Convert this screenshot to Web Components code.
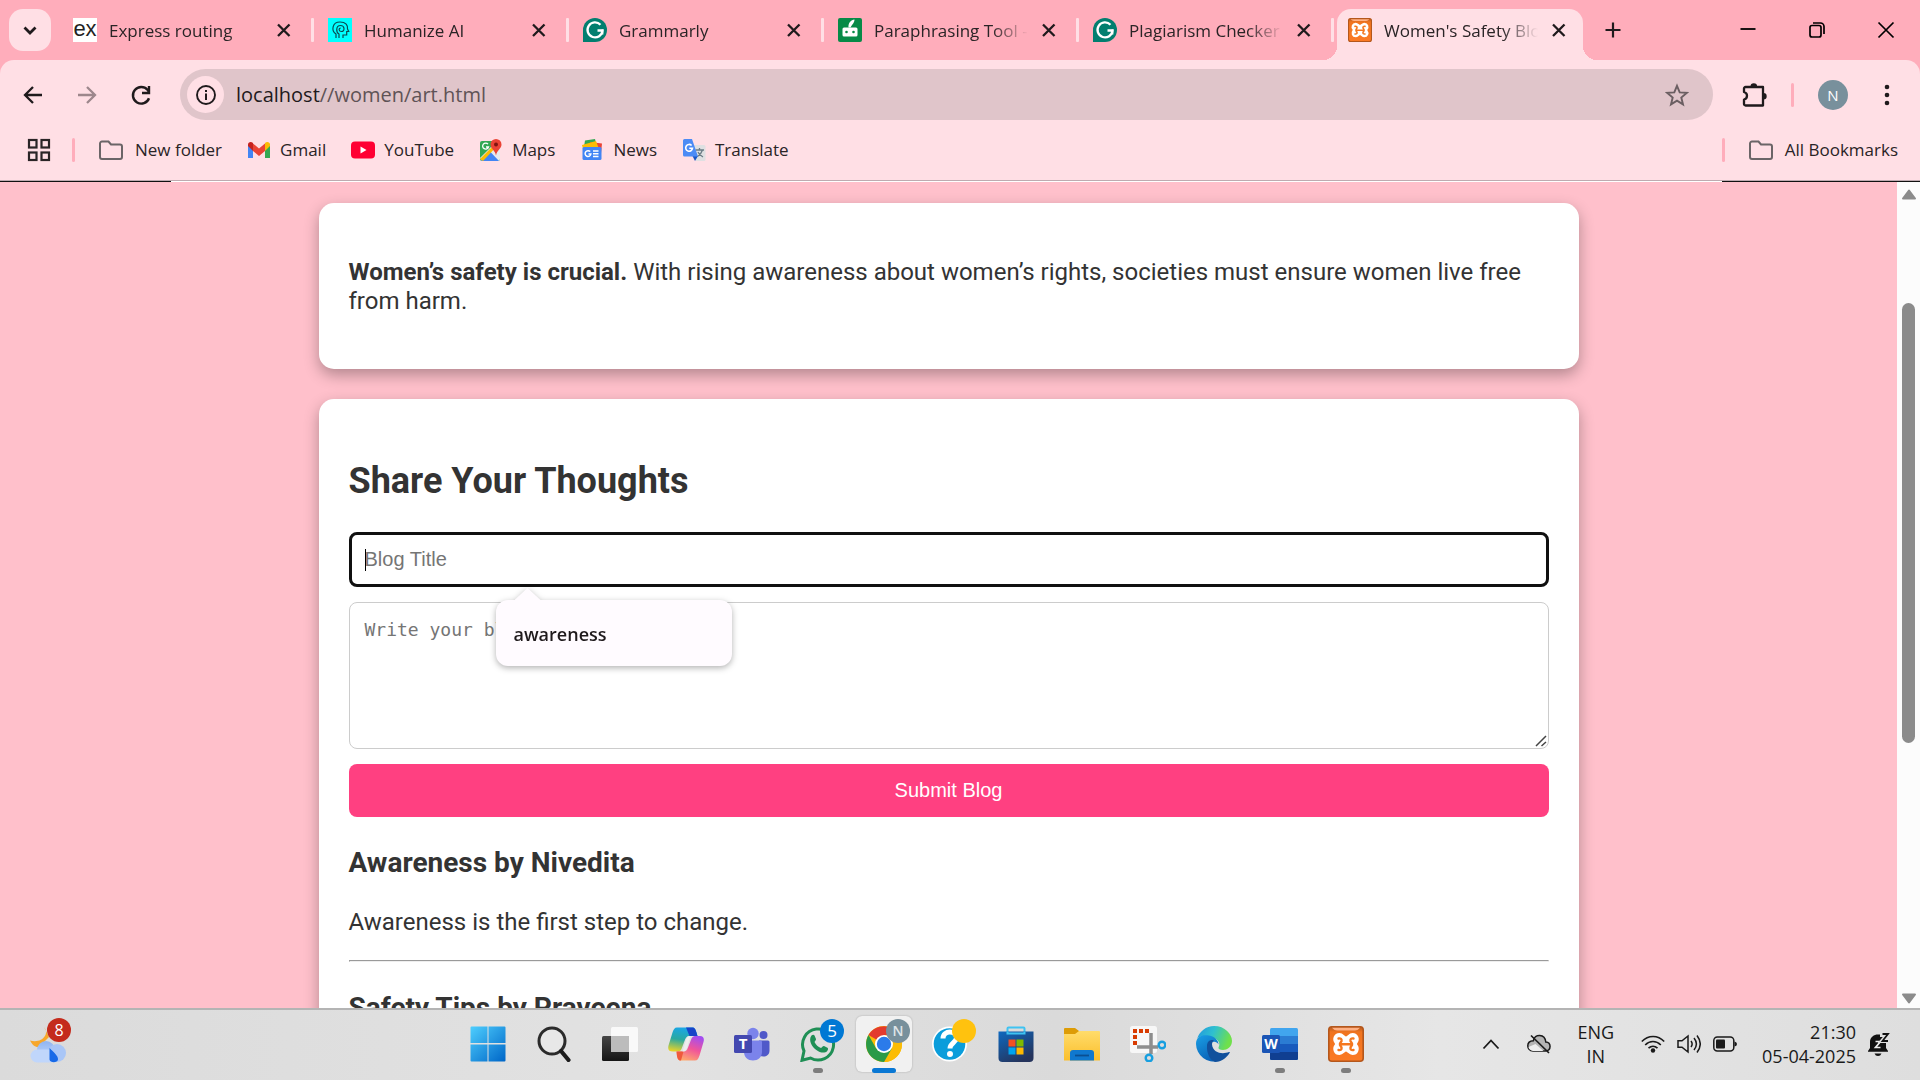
<!DOCTYPE html>
<html lang="en">
<head>
<meta charset="utf-8">
<title>Women's Safety Blog</title>
<style>
  html, body { margin: 0; height: 100%; }
  body { overflow: hidden; font-family: "Open Sans", "Noto Sans", sans-serif; color: #2a2426; }
  desktop-shell { height: 100vh; }
</style>
</head>
<body>
<desktop-shell>
  <tab-strip slot="tabs">
    <browser-tab icon="express" label="Express routing"></browser-tab>
    <browser-tab icon="humanize" label="Humanize AI"></browser-tab>
    <browser-tab icon="grammarly" label="Grammarly"></browser-tab>
    <browser-tab icon="quill" label="Paraphrasing Tool -"></browser-tab>
    <browser-tab icon="grammarly" label="Plagiarism Checker"></browser-tab>
    <browser-tab icon="xampp" label="Women's Safety Blog" active></browser-tab>
  </tab-strip>
  <address-bar slot="address"></address-bar>
  <bookmarks-bar slot="bookmarks">
    <bookmark-link icon="folder">New folder</bookmark-link>
    <bookmark-link icon="gmail">Gmail</bookmark-link>
    <bookmark-link icon="youtube">YouTube</bookmark-link>
    <bookmark-link icon="maps">Maps</bookmark-link>
    <bookmark-link icon="news">News</bookmark-link>
    <bookmark-link icon="translate">Translate</bookmark-link>
    <bookmark-link slot="end" icon="folder">All Bookmarks</bookmark-link>
  </bookmarks-bar>
  <page-view slot="page">
    <blog-card>
      <blog-text><b>Women’s safety is crucial.</b> With rising awareness about women’s rights, societies must ensure women live free from harm.</blog-text>
    </blog-card>
    <blog-card>
      <blog-form></blog-form>
      <blog-post heading="Awareness by Nivedita">Awareness is the first step to change.</blog-post>
      <blog-post heading="Safety Tips by Praveena"></blog-post>
    </blog-card>
  </page-view>
  <task-bar slot="taskbar">
    <task-item icon="start" label="Start"></task-item>
    <task-item icon="search" label="Search"></task-item>
    <task-item icon="taskview" label="Task view"></task-item>
    <task-item icon="copilot" label="Copilot"></task-item>
    <task-item icon="teams" label="Teams"></task-item>
    <task-item icon="whatsapp" label="WhatsApp" badge="5" tone="blue" state="running"></task-item>
    <task-item icon="chrome" label="Chrome" badge="N" tone="slate" state="current"></task-item>
    <task-item icon="help" label="Help" badge="" tone="amber"></task-item>
    <task-item icon="store" label="Store"></task-item>
    <task-item icon="explorer" label="File Explorer"></task-item>
    <task-item icon="snip" label="Snipping Tool"></task-item>
    <task-item icon="edge" label="Edge"></task-item>
    <task-item icon="word" label="Word" state="running"></task-item>
    <task-item icon="xampp" label="XAMPP" state="running"></task-item>
  </task-bar>
</desktop-shell>

<script>
/* Icon set: name -> [viewBox, markup] */
const ICONS = {
  chevron: ['0 0 24 24', '<path d="M6.500 9.500l5.500 5.500 5.500-5.500" fill="none" stroke="#1f1a1c" stroke-width="2.800"/>'],
  close: ['0 0 18 18', '<path d="M3 3.500l11.500 11.500M14.500 3.500L3 15" fill="none" stroke="#1f1a1c" stroke-width="2.300"/>'],
  plus: ['0 0 18 18', '<path d="M9 1.500v15M1.500 9h15" stroke="#1f1a1c" stroke-width="2.200"/>'],
  minimize: ['0 0 18 18', '<path d="M1.500 8h15" stroke="#000" stroke-width="1.800"/>'],
  restore: ['0 0 18 18', '<g fill="none" stroke="#000" stroke-width="1.700"><rect x="2" y="4.500" width="11" height="11.500" rx="2"/><path d="M5 2h7.500a3.500 3.500 0 013.500 3.500V13"/></g>'],
  winclose: ['0 0 18 18', '<path d="M1.500 1.500l15 15M16.500 1.500l-15 15" stroke="#000" stroke-width="1.700"/>'],
  back: ['0 0 24 24', '<path d="M21 12H4M12 4l-8 8 8 8" fill="none" stroke="#1f1a1c" stroke-width="2.300"/>'],
  forward: ['0 0 24 24', '<path d="M3 12h17M12 4l8 8-8 8" fill="none" stroke="#9d878c" stroke-width="2.300"/>'],
  reload: ['0 0 24 24', '<path d="M20 15.200A8.300 8.300 0 1118.500 6.800l1.300 1.800" fill="none" stroke="#1f1a1c" stroke-width="2.400"/><path d="M20 3v7h-7" fill="none" stroke="#1f1a1c" stroke-width="2.400"/>'],
  info: ['0 0 24 24', '<circle cx="12" cy="12" r="9" fill="none" stroke="#1f1a1c" stroke-width="1.900"/><path d="M12 10.500v6.500M12 7v2" stroke="#1f1a1c" stroke-width="2"/>'],
  star: ['0 0 24 24', '<path d="M12 2.800l2.700 6.600 7 .5-5.400 4.600 1.700 6.900-6-3.800-6 3.800 1.700-6.900-5.400-4.600 7-.5z" fill="none" stroke="#6b5f62" stroke-width="1.900"/>'],
  puzzle: ['0 0 26 26', '<path d="M4.500 5h17.500v18.500h-17.500a1.500 1.500 0 01-1.500-1.500v-4.500c4-1 4-6.500 0-7.500V6.500a1.500 1.500 0 011.500-1.500z" fill="none" stroke="#1f1a1c" stroke-width="2.300" stroke-linejoin="round"/><path d="M9.500 4.500a3.300 3.300 0 016.600 0zM22.500 11a3.200 3.200 0 010 6.400z" fill="#1f1a1c"/>'],
  dots: ['0 0 24 24', '<g fill="#1f1a1c"><circle cx="12" cy="4" r="2.300"/><circle cx="12" cy="12" r="2.300"/><circle cx="12" cy="20" r="2.300"/></g>'],
  apps: ['0 0 24 24', '<g fill="none" stroke="#2a2426" stroke-width="2.200"><rect x="2" y="2" width="7.500" height="7.500"/><rect x="14.500" y="2" width="7.500" height="7.500"/><rect x="2" y="14.500" width="7.500" height="7.500"/><rect x="14.500" y="14.500" width="7.500" height="7.500"/></g>'],
  folder: ['0 0 24 24', '<path d="M1 5.500a2 2 0 012-2h6.500l2.500 3h9a2 2 0 012 2v10.500a2 2 0 01-2 2H3a2 2 0 01-2-2z" fill="none" stroke="#6b6567" stroke-width="2"/>'],
  gmail: ['0 0 24 24', '<path d="M1 6v14h5V9.500z" fill="#4285f4"/><path d="M23 6v14h-5V9.500z" fill="#34a853"/><path d="M6 5.500v7.500l6 5 6-5V5.500l-6 5z" fill="#ea4335"/><path d="M1 8V6.500C1 4 4 3 6 5v8z" fill="#c5221f"/><path d="M23 8V6.500C23 4 20 3 18 5v8z" fill="#fbbc04"/>'],
  youtube: ['0 0 24 24', '<rect y="3.500" width="24" height="17" rx="4" fill="#ff0033"/><path d="M9.500 8.500v7l6-3.500z" fill="#fff"/>'],
  maps: ['0 0 24 24', '<rect x="1" y="3" width="20" height="20" rx="2" fill="#34a853"/><path d="M1 20L18 3h1l2 2v16a2 2 0 01-2 2H3z" fill="#e8eaed"/><path d="M2 22l9-8.500 9 9.500H3z" fill="#4285f4"/><path d="M1 21L19 3v4L4 23z" fill="#fbbc04"/><path d="M9 6.200a3 3 0 10.500 2.800H7" fill="none" stroke="#fff" stroke-width="1.300"/><path d="M17 1a5.500 5.500 0 015.500 5.500c0 4-4.500 5.500-5.500 11-1-5.500-5.500-7-5.500-11A5.500 5.500 0 0117 1z" fill="#ea4335"/><circle cx="17" cy="6.500" r="2" fill="#811411"/>'],
  news: ['0 0 24 24', '<path d="M5 2.500l10-1.500 2 8H4z" fill="#34a853"/><path d="M10 4l12 1.500-1 10H9z" fill="#ea4335"/><path d="M2 7l14-4 3 8H3z" fill="#fbbc04"/><rect x="2.500" y="9" width="19" height="13" rx="1.500" fill="#4285f4"/><path d="M10.200 13.600a2.900 2.900 0 10.700 2.400H8.500M13 13h5.500M13 15.700h5.500M13 18.400h5.500" fill="none" stroke="#fff" stroke-width="1.500"/>'],
  translate: ['0 0 24 24', '<path d="M10 7h12a1.500 1.500 0 011.500 1.500v13A1.500 1.500 0 0122 23h-8z" fill="#dfe0e2"/><path d="M13.500 12h8.500M17.500 10v2M20.500 12c-1 3.500-3 5-5 6.500M16 14c1 2.500 3 4 5 5" fill="none" stroke="#6b7c85" stroke-width="1.300"/><path d="M10.500 18H16l-3 5z" fill="#1a56c4"/><path d="M2.500 1H10l6 17.500H2.500A1.500 1.500 0 011 17V2.500A1.500 1.500 0 012.500 1z" fill="#4c8bf5"/><path d="M9.600 7.500a3.400 3.400 0 10.900 2.700H7.300" fill="none" stroke="#fff" stroke-width="1.600"/>'],
  express: ['0 0 24 24', '<rect width="24" height="24" fill="#fff"/><text x="12" y="17.500" font-family="Liberation Sans" font-size="22" text-anchor="middle" fill="#222">ex</text>'],
  humanize: ['0 0 24 24', '<rect width="24" height="24" fill="#0ff"/><path d="M8 20v-4C3 13 4 4 12 4c6 0 8 3.500 7.500 7l1.200 2.500h-2V17H15v3M11 20v-4c-3-1.500-3.500-8.500 1.500-8.500 4.500 0 4.500 6 1 6-3 0-3-3.500-.8-3.500" fill="none" stroke="#0a4a50" stroke-width="1.200"/>'],
  grammarly: ['0 0 24 24', '<path d="M0 24V12A12 12 0 1112 24z" fill="#027e6f"/><path d="M17.500 6.800A7.500 7.500 0 1019.500 12.500h-5" fill="none" stroke="#fff" stroke-width="2.300"/><path d="M19.500 11.500v5" stroke="#fff" stroke-width="1.800"/>'],
  quill: ['0 0 24 24', '<rect width="24" height="24" rx="2" fill="#078a47"/><rect x="4.500" y="9.500" width="15" height="9" rx="1.500" fill="#fff"/><circle cx="8.500" cy="14" r="1.300" fill="#078a47"/><circle cx="15.500" cy="14" r="1.300" fill="#078a47"/><path d="M10.500 9.500C10 5 13 2 16.500 1.500 16.500 5 14 6.500 12.500 9.500z" fill="#fff"/>'],
  xampp: ['0 0 36 36', '<defs><linearGradient id="a" x2="0" y2="1"><stop offset="0" stop-color="#b25a22"/><stop offset=".15" stop-color="#f0741f"/><stop offset="1" stop-color="#fb7a24"/></linearGradient></defs><rect x=".8" y=".8" width="34.400" height="34.400" rx="3" fill="url(#a)" stroke="#b4571c" stroke-width="1.600"/><path d="M4 1.800h28q-2 2.700-5 2.700H9q-3 0-5-2.700z" fill="#ffb184"/><path d="M11.500 8.500c3 0 4.500 3.500 6.500 3.500s3.500-3.500 6.500-3.500c4.500 0 6 5 3.500 8-.8 1-.8 2 0 3 2.500 3 1 8-3.500 8-3 0-4.500-3.500-6.500-3.500s-3.500 3.500-6.500 3.500c-4.500 0-6-5-3.500-8 .8-1 .8-2 0-3-2.500-3-1-8 3.500-8z" fill="#fff" stroke="#fff" stroke-width="3" stroke-linejoin="round"/><path d="M10.500 12.500q3.500-.5 3 2.500l-1.500 2.500v1.500l1.500 2.500q.5 3-3 2.500M25.500 12.500q-3.500-.5-3 2.500l1.500 2.500v1.500l-1.500 2.500q-.5 3 3 2.500M12.500 18.300h11" fill="none" stroke="#f5781f" stroke-width="2.400" stroke-linecap="round"/>'],
  weather: ['0 0 36 36', '<defs><linearGradient id="a" x2="0" y2="1"><stop offset="0" stop-color="#8fb4f2"/><stop offset="1" stop-color="#c4d9fb"/></linearGradient></defs><path d="M14 0C20 7 12 17 0 13.500c2 4 5 7 9 6.500L19 10z" fill="#f7a72a"/><circle cx="16" cy="23" r="9" fill="url(#a)"/><circle cx="27" cy="26" r="9" fill="#a9c6f7"/><path d="M7 22.500h15V35.500H7A6.500 6.500 0 017 22.500z" fill="#c0d6fb"/><path d="M19.500 21c4 4 9 8 8.500 11.500-.5 3.500-8 3.500-8.500 0z" fill="#1769e8"/>'],
  start: ['0 0 36 36', '<defs><linearGradient id="a" gradientUnits="userSpaceOnUse" x1="0" y1="0" x2="34" y2="36"><stop offset="0" stop-color="#4fd0ff"/><stop offset="1" stop-color="#0067c8"/></linearGradient></defs><path d="M1.500 .5h16v16.500H.5V1.500a1 1 0 011-1zM18.500 .5h16a1 1 0 011 1V17h-17zM.5 18.500h17V35.500h-16a1 1 0 01-1-1zM18.500 18.500h17v16a1 1 0 01-1 1h-16z" fill="url(#a)"/>'],
  search: ['0 0 36 36', '<circle cx="16" cy="15" r="13" fill="#efefef" fill-opacity=".5" stroke="#2b2b2b" stroke-width="3"/><path d="M25 25l7.500 9" stroke="#1c1c1c" stroke-width="4.200" stroke-linecap="round"/>'],
  taskview: ['0 0 36 36', '<defs><linearGradient id="a" x2="0" y2="1"><stop offset="0" stop-color="#454545"/><stop offset="1" stop-color="#151515"/></linearGradient></defs><rect x="0" y="10" width="27" height="25" rx="1.500" fill="url(#a)"/><rect x="9" y="1" width="27" height="25" rx="1.500" fill="#fff" fill-opacity=".8"/><rect x="9" y="10" width="18" height="16" fill="#bcbcbc"/>'],
  copilot: ['0 0 36 36', '<defs><linearGradient id="a" x1=".5" x2=".3" y2="1"><stop offset="0" stop-color="#1aa6e8"/><stop offset=".5" stop-color="#2aa9a0"/><stop offset="1" stop-color="#e8d32a"/></linearGradient><linearGradient id="b" x1=".7" x2=".3" y2="1"><stop offset="0" stop-color="#a34df0"/><stop offset=".5" stop-color="#f0559a"/><stop offset="1" stop-color="#ffa96b"/></linearGradient></defs><path d="M9 1.500h15c3 0 3.500 2 4.500 5l1 3.500h-8c-3 0-4 2-5 5l-3 8c-1 2-2 2.500-4 2.500H5c-4 0-5.500-2-4.500-6l4-13c1-3 2-5 4.500-5z" fill="url(#a)"/><path d="M27 34.500H13c-3 0-3.500-2-4-4.500l-.5-4.500h7c2.500 0 3.500-1.500 4.500-4l3.500-9C24.500 10.500 26 10 28 10h4c3.500 0 4.500 2.500 3.500 6l-4 13.500c-1 3-2 5-4.500 5z" fill="url(#b)"/><path d="M18 1.500h6c3 0 3.500 2 4.500 5l1 3.500h-8z" fill="#1744c8"/><path d="M8.500 25.500h7L13 34.500c-3 0-3.500-2-4-4.500z" fill="#ef5a3c"/><path d="M18.500 12.500c1-2 2-2.500 4-2.500l-3.500 12c-1 2.500-2 3.500-4.500 3.500z" fill="#eee"/>'],
  teams: ['0 0 36 36', '<circle cx="19" cy="7.500" r="5.700" fill="#7b83eb"/><circle cx="29.500" cy="9" r="4" fill="#5059c9"/><path d="M25 14.500h9a1.500 1.500 0 011.500 1.500v8.500c0 4-3 6-6 6s-5-1-6-3z" fill="#5059c9"/><path d="M10 14.500h16.500a1.500 1.500 0 011.500 1.500v10c0 5-4 8.500-9 8.500s-9-3.500-9-8.500z" fill="#7b83eb"/><rect x="0" y="9" width="18" height="18" rx="1.500" fill="#4348b0"/><text x="9" y="23" font-family="Open Sans" font-size="15" font-weight="700" fill="#fff" text-anchor="middle">T</text>'],
  whatsapp: ['0 0 36 36', '<path d="M2 34.300l2-9.300A15.500 15.500 0 1110.500 32z" fill="none" stroke="#1f8f55" stroke-width="3"/><path d="M11.500 9.500c1-1 2.500-1 3 0l1.500 3.500c.3 1-1 2-1.500 3 1.500 3 3.500 5 6.500 6 1-.7 2-2.300 3-2l3.500 1.700c1 .6.600 2.300-.5 3.500-2.500 2.500-7 1.500-11-1.500s-8-9.500-4.500-14.200z" fill="#1f8f55"/>'],
  chrome: ['0 0 36 36', '<circle cx="18" cy="18" r="18" fill="#fbbc05"/><path d="M18 18L2.500 9A18 18 0 0133.500 9H18z" fill="#e33b2e"/><path d="M18 9h15.600a18 18 0 012.400 9A18 18 0 0118 36l8-14z" fill="#fbbc05"/><path d="M2.500 9A18 18 0 0018 36l7.800-13.500H10.200z" fill="#2a9a48"/><circle cx="18" cy="18" r="9" fill="#fff"/><circle cx="18" cy="18" r="7.200" fill="#2b7bea"/>'],
  help: ['0 0 36 36', '<circle cx="17.500" cy="18" r="17.500" fill="#fff"/><circle cx="17.500" cy="18" r="15.800" fill="#0a9ddb"/><path d="M11 12.500c0-9 14-8 13.500-.5-.3 4.500-6.500 5-6.500 10.500" fill="none" stroke="#fff" stroke-width="5"/><circle cx="18" cy="28" r="3" fill="#fff"/>'],
  store: ['0 0 36 36', '<defs><linearGradient id="a" x2=".6" y2="1"><stop offset="0" stop-color="#0e69c0"/><stop offset="1" stop-color="#25345c"/></linearGradient></defs><path d="M9.500 8V2.500a1 1 0 011-1h15a1 1 0 011 1V8" fill="none" stroke="#3fc3f2" stroke-width="2"/><path d="M.5 5.500h35V32a4 4 0 01-4 4h-27a4 4 0 01-4-4z" fill="url(#a)"/><path d="M9.500 5.500v2h17v-2" fill="none" stroke="#3fc3f2" stroke-width="2"/><path d="M10.500 13.500h7v7h-7z" fill="#f25022"/><path d="M18.500 13.500h7v7h-7z" fill="#7fba00"/><path d="M10.500 21.500h7v7h-7z" fill="#00a4ef"/><path d="M18.500 21.500h7v7h-7z" fill="#ffb900"/>'],
  explorer: ['0 0 36 36', '<defs><linearGradient id="a" x2="0" y2="1"><stop offset="0" stop-color="#ffdc6b"/><stop offset="1" stop-color="#fbbf2d"/></linearGradient></defs><path d="M0 3a1 1 0 011-1h10l4 3H35v8H0z" fill="#dd9c06"/><path d="M0 8h11l4-3h20a1 1 0 011 1v28.500H0z" fill="url(#a)"/><path d="M6 34.500V27a3 3 0 013-3h18a3 3 0 013 3v7.500z" fill="#0f78cf"/><path d="M11 29.500h14" stroke="#0a4f92" stroke-width="1.800"/>'],
  snip: ['0 0 36 36', '<rect x="0" y="0" width="27" height="27" rx="2.500" fill="#f7f7f7"/><path d="M3 5h17" stroke="#d83b01" stroke-width="4" stroke-dasharray="4 2"/><path d="M5 9v10" stroke="#d83b01" stroke-width="4" stroke-dasharray="4 2"/><path d="M21 7v21M7 21h21" stroke="#8e8e8e" stroke-width="3.500"/><circle cx="19" cy="32" r="3.300" fill="none" stroke="#179fe0" stroke-width="2.400"/><circle cx="32" cy="19" r="3.300" fill="none" stroke="#179fe0" stroke-width="2.400"/>'],
  edge: ['0 0 36 36', '<defs><linearGradient id="a" x2="1" y2=".3"><stop offset="0" stop-color="#2196e0"/><stop offset=".5" stop-color="#2fc0cf"/><stop offset="1" stop-color="#6fe04b"/></linearGradient><linearGradient id="b" x2=".5" y2="1"><stop offset="0" stop-color="#1aa0e6"/><stop offset="1" stop-color="#0a63b8"/></linearGradient></defs><path d="M1 13A18 18 0 0118 0c11 0 18 8 18 15 0 6-5 9-9 9-3 0-5-1-4.500-2.500C25 17 22 13 17 12 10 10 3 9 1 13z" fill="url(#a)"/><path d="M0 18C0 9 8 8.500 13 9.500c6 1 9.500 5 9.500 9-2-4-8-4-9 2-1 7 4 13 9 14.500A18 18 0 010 18z" fill="url(#b)"/><path d="M11 20c0-5 4-7 7-5.500-1.500 1-2 2.500-2 4 1 9 11 10 17 7.500.8-.3 1 .3.700.8C30 33 24 36 19 36c-5-2-8.500-9-8-16z" fill="#11509c"/>'],
  word: ['0 0 36 36', '<rect x="8" y="2" width="28" height="32" rx="1.500" fill="#41a5ee"/><path d="M8 10h28v8H8z" fill="#2b7cd3"/><path d="M8 18h28v8H8z" fill="#185abd"/><path d="M8 26h28v6.500a1.500 1.500 0 01-1.500 1.500h-25A1.500 1.500 0 018 32.500z" fill="#103f91"/><rect x="0" y="9" width="18" height="18" rx="1.500" fill="#1b55b5"/><text x="9" y="23" font-family="Open Sans" font-size="14" font-weight="700" fill="#fff" text-anchor="middle">W</text>'],
  up: ['0 0 24 24', '<path d="M4.500 16.500l7.500-8 7.500 8" fill="none" stroke="#1a1a1a" stroke-width="1.800"/>'],
  cloudoff: ['0 0 24 24', '<path d="M6 19h12.500c6-.5 6-8.500.3-9C18 1.500 7.500 1.500 6.300 8.800-1 9-1 18.500 6 19z" fill="#b4b4b4" stroke="#1a1a1a" stroke-width="1.500"/><path d="M1.500 15l7-3 8 7H6q-4-1-4.500-4z" fill="#eee"/><path d="M4 3.500L22 21" stroke="#1a1a1a" stroke-width="1.700"/>'],
  wifi: ['0 0 24 24', '<g fill="none" stroke="#1a1a1a" stroke-width="1.600"><path d="M.8 9.500c6.500-6.700 16-6.700 22.400 0M4.200 13c4.500-4.700 11-4.700 15.600 0M7.500 16.200c2.700-2.600 6.300-2.600 9 0"/></g><circle cx="12" cy="18.500" r="2.200" fill="#1a1a1a"/>'],
  speaker: ['0 0 24 24', '<g fill="none" stroke="#1a1a1a" stroke-width="1.500"><path d="M1 8.800h4L11 4v16l-6-4.800H1zM14 9q2.300 3 0 6M17 6q4.800 6 0 12M20 3.500q6.500 8.500 0 17"/></g>'],
  battery: ['0 0 24 24', '<rect x=".8" y="5" width="20" height="14" rx="3.500" fill="none" stroke="#1a1a1a" stroke-width="1.500"/><rect x="3" y="7.500" width="9" height="9" rx="1" fill="#1a1a1a"/><path d="M21.500 9.500q2.500.5 2.500 2.500t-2.500 2.500z" fill="#1a1a1a"/>'],
  bell: ['0 0 24 24', '<path d="M2 19l2-3V10C4 5 8 2.500 12 2.500h2V5h6v11l2 3v.8H2zM8.500 21.500h7q-1 2.500-3.500 2.500t-3.500-2.500z" fill="#111"/><path d="M9.500 9.500h5l-5 6h5" fill="none" stroke="#eee" stroke-width="1.700"/><path d="M16 2.500h5.500L16 9h6" fill="none" stroke="#e0e0e0" stroke-width="4"/><path d="M16.500 2h5.500l-5.500 7H22" fill="none" stroke="#111" stroke-width="1.800"/>']
};

/* Registers an element whose open shadow root is built by render(host). */
function define(name, css, render) {
  customElements.define(name, class extends HTMLElement {
    connectedCallback() {
      if (this.shadowRoot) return;
      const t = document.createElement('template');
      t.innerHTML = '<style>:host,*{box-sizing:border-box}button{border:0;padding:0;background:none;font:inherit;color:inherit}' + css + '</style>' + render(this);
      this.attachShadow({ mode: 'open' }).append(t.content.cloneNode(true));
    }
  });
}

define('ui-icon', ':host{display:block;flex:none;width:var(--icon,24px);height:var(--icon,24px)}svg{display:block;width:100%;height:100%}', h => {
  const [box, body] = ICONS[h.getAttribute('name')];
  return `<svg viewBox="${box}" aria-hidden="true">${body}</svg>`;
});

define('desktop-shell', `
  :host{display:flex;flex-direction:column;background:#ffadbb}
  .toolbar{flex:none;background:#ffdfe5;border-radius:14px 14px 0 0}
  .seam{height:1px;background:#bfaab0}
  .edge{display:flex;justify-content:space-between;height:1px;background:#fff}
  .edge i{background:#111;width:171px}.edge i:last-child{width:198px}
  ::slotted([slot=page]){flex:1;min-height:0}`, () => `
  <slot name="tabs"></slot>
  <div class="toolbar"><slot name="address"></slot><slot name="bookmarks"></slot>
  <div class="seam"></div><div class="edge"><i></i><i></i></div></div>
  <slot name="page"></slot><slot name="taskbar"></slot>`);

define('tab-strip', `
  :host{display:flex;align-items:stretch;height:60px;flex:none;padding-left:9px}
  .list{width:42px;height:42px;margin:9px 8px 9px 0;border-radius:14px;background:#ffdfe5;display:grid;place-items:center}
  .tabs{display:flex;flex:0 1 auto;min-width:0}
  .new{width:48px;display:grid;place-items:center;--icon:18px}
  .win{margin-left:auto;display:flex;--icon:18px}
  .win button{width:69px;display:grid;place-items:center}`, () => `
  <button class="list" aria-label="Search tabs"><ui-icon name="chevron"></ui-icon></button>
  <div class="tabs" role="tablist"><slot></slot></div>
  <button class="new" aria-label="New tab"><ui-icon name="plus"></ui-icon></button>
  <div class="win"><button aria-label="Minimize"><ui-icon name="minimize"></ui-icon></button><button aria-label="Restore"><ui-icon name="restore"></ui-icon></button><button aria-label="Close window"><ui-icon name="winclose"></ui-icon></button></div>`);

define('browser-tab', `
  :host{display:flex;flex:0 1 255px;width:255px;height:60px;padding-top:9px;align-items:stretch}
  .shape{position:relative;flex:1;min-width:0;display:flex;align-items:center;padding:0 0 9px 14px}
  .tab{flex:1;min-width:0;display:flex;align-items:center;gap:12px;text-align:left}
  .title{flex:1;min-width:0;overflow:hidden;white-space:nowrap;font-size:17px;line-height:26px;padding-top:2px;-webkit-mask-image:linear-gradient(90deg,#000 calc(100% - 36px),transparent);mask-image:linear-gradient(90deg,#000 calc(100% - 36px),transparent)}
  .close{--icon:18px;margin:0 18px 0 12px;flex:none}
  .sep{width:3px;height:24px;background:#ffdfe5;border-radius:1px}
  :host([active]) .shape{background:#ffdfe5;border-radius:14px 14px 0 0;margin:0 6px 0 3px;padding-left:11px}
  :host([active]) .sep{display:none}
  :host([active]) .close{margin-right:15px}
  :host([active]) .shape::before,:host([active]) .shape::after{content:"";position:absolute;bottom:0;width:14px;height:14px}
  .shape::before{right:100%;background:radial-gradient(circle at 0 0,transparent 14px,#ffdfe5 14px)}
  .shape::after{left:100%;background:radial-gradient(circle at 100% 0,transparent 14px,#ffdfe5 14px)}`, h => `
  <div class="shape"><button class="tab" role="tab" aria-selected="${h.hasAttribute('active')}"><ui-icon name="${h.getAttribute('icon')}"></ui-icon><span class="title">${h.getAttribute('label')}</span></button>
  <button class="close" aria-label="Close tab"><ui-icon name="close"></ui-icon></button><span class="sep"></span></div>`);

define('address-bar', `
  :host{display:flex;align-items:center;padding:9px 9px 9px 6px}
  .nav{width:54px;height:48px;display:grid;place-items:center}
  .box{flex:1;height:51px;margin:0 17px 0 12px;border-radius:26px;background:#e0c5ca;display:flex;align-items:center;padding:0 24px 0 7px}
  .site{width:37px;height:37px;border-radius:50%;background:#ffdfe5;display:grid;place-items:center;margin-right:12px}
  .url{flex:1;font-size:20px;line-height:28px;color:#5f5356}.url b{font-weight:400;color:#1f1a1c}
  .ext,.more{width:48px;height:48px;display:grid;place-items:center}.ext{--icon:26px}
  .sep{width:3px;height:24px;border-radius:2px;background:#ffadbb;margin:0 24px 0 13px}
  .me{width:30px;height:30px;border-radius:50%;background:#78909c;color:#fff;font-size:15px;line-height:30px;margin-right:15px}`, () => `
  <button class="nav" aria-label="Back"><ui-icon name="back"></ui-icon></button><button class="nav" aria-label="Forward"><ui-icon name="forward"></ui-icon></button><button class="nav" aria-label="Reload"><ui-icon name="reload"></ui-icon></button>
  <div class="box"><button class="site" aria-label="Site information"><ui-icon name="info"></ui-icon></button><span class="url"><b>localhost</b>//women/art.html</span><button aria-label="Bookmark"><ui-icon name="star"></ui-icon></button></div>
  <button class="ext" aria-label="Extensions"><ui-icon name="puzzle"></ui-icon></button><span class="sep"></span><button class="me">N</button><button class="more" aria-label="Menu"><ui-icon name="dots"></ui-icon></button>`);

define('bookmarks-bar', `
  :host{display:flex;align-items:center;height:51px;padding:0 22px 9px 27px}
  .sep{width:3px;height:24px;border-radius:2px;background:#ffadbb;margin:0 24px 0 21px}
  .links{display:flex;gap:25px}.end{margin-left:auto;display:flex;align-items:center}`, () => `
  <button aria-label="Apps"><ui-icon name="apps"></ui-icon></button><span class="sep"></span><nav class="links"><slot></slot></nav>
  <div class="end"><span class="sep"></span><slot name="end"></slot></div>`);

define('bookmark-link', `
  :host{display:block}a{display:flex;align-items:center;gap:9px;color:#2a2426;text-decoration:none;font-size:17px;line-height:26px}
  .folder{gap:12px}`, h => `<a href="#" class="${h.getAttribute('icon')}"><ui-icon name="${h.getAttribute('icon')}"></ui-icon><slot></slot></a>`);

define('page-view', `
  :host{display:flex;background:#ffc0cb;overflow:hidden}
  main{flex:1;min-width:0;overflow:hidden;padding-top:21px;font-family:Roboto,sans-serif;font-size:24px;line-height:29px;color:#333}
  .wrap{display:flex;flex-direction:column;gap:30px;max-width:1260px;margin:0 auto}
  .bar{width:23px;background:#fcfcfc;display:flex;flex-direction:column;align-items:center;padding:7px 0 4px}
  svg{display:block;width:16px;height:11px}
  .thumb{width:13px;flex:441;border-radius:7px;background:#8b8b8b}
  .above{flex:103}.below{flex:250}`, () => `
  <main><div class="wrap"><slot></slot></div></main>
  <div class="bar" aria-hidden="true"><svg viewBox="0 0 16 11"><path d="M8 1.500L14 9.500H2z" fill="#8b8b8b" stroke="#8b8b8b" stroke-width="2" stroke-linejoin="round"/></svg><span class="above"></span><span class="thumb"></span><span class="below"></span><svg viewBox="0 0 16 11"><path d="M8 9.500L14 1.500H2z" fill="#8b8b8b" stroke="#8b8b8b" stroke-width="2" stroke-linejoin="round"/></svg></div>`);

define('blog-card', ':host{display:block;background:#fff;border-radius:15px;padding:30px;box-shadow:0 6px 15px rgba(0,0,0,.3)}', () => '<slot></slot>');
define('blog-text', ':host{display:block}p{margin:25px 0 23px}', () => '<p><slot></slot></p>');
define('blog-post', `:host{display:block}h3{font-size:28px;line-height:33px;margin:0 0 29px;padding-top:29px}p{margin:0 0 23px}hr{margin:0;border:1px inset #eee;color:#808080}`, h => `
  <h3>${h.getAttribute('heading')}</h3><p><slot></slot></p><hr>`);

define('blog-form', `
  :host{display:block}
  h2{font-size:36px;line-height:42px;margin:0 0 30px;padding-top:31px}
  form{display:flex;flex-direction:column;gap:15px}
  .field{position:relative;display:flex}
  input,textarea{display:block;width:100%;margin:0;padding:15px;border:1px solid #ccc;border-radius:8px;background:#fff;outline:0}
  input{font:20px/23px "Liberation Sans",Arial,sans-serif;height:55px;padding:13px;border:3px solid #101010}
  .caret{position:absolute;left:16px;top:17px;width:1px;height:22px;background:#000}
  .grip{position:absolute;right:2px;bottom:2px;width:12px;height:12px;pointer-events:none}
  textarea{height:147px;font:18px/23px "DejaVu Sans Mono",monospace;resize:vertical}
  textarea::-webkit-resizer{background:none}
  ::placeholder{color:#757575;opacity:1}
  .submit{height:53px;border-radius:8px;background:#ff4081;color:#fff;font:20px/23px "Liberation Sans",Arial,sans-serif}
  suggestion-popup{position:absolute;left:147px;top:56px;z-index:2}`, () => `
  <h2>Share Your Thoughts</h2>
  <form><div class="field"><input type="text" placeholder="Blog Title" aria-label="Blog Title"><i class="caret"></i><suggestion-popup>awareness</suggestion-popup></div>
  <div class="field"><textarea placeholder="Write your blog..." aria-label="Write your blog"></textarea><svg class="grip" viewBox="0 0 12 12" aria-hidden="true"><path d="M1 11L11 1M6.500 11L11 7" stroke="#444" stroke-width="1.500"/></svg></div>
  <button type="button" class="submit">Submit Blog</button></form>`);

define('suggestion-popup', `
  :host{display:block;width:236px;filter:drop-shadow(0 2px 3px rgba(0,0,0,.3))}
  .tip{width:26px;height:12px;margin-left:19px;background:#fffbff;clip-path:polygon(50% 0,100% 100%,0 100%)}
  button{display:block;width:100%;height:66px;border-radius:12px;background:#fffbff;padding:2px 18px 0;text-align:left;font:600 18px/26px "Open Sans","Noto Sans",sans-serif;color:#1f1a1c}`, () => '<div class="tip"></div><button type="button"><slot></slot></button>');

define('task-bar', `
  :host{display:grid;grid-template-columns:455px auto 1fr;height:72px;flex:none;border-top:2px solid #b4b4b4;background:linear-gradient(90deg,#dbdbdb,#e2e2e2 35%,#dadada 55%,#e6e6e6 75%,#dedede)}
  .weather{position:relative;width:36px;height:36px;margin:17px 0 0 30px;--icon:36px}
  .count{position:absolute;left:17px;top:-9px;width:24px;height:24px;border-radius:50%;background:#c42b1c;color:#fff;font-size:16px;line-height:24px;text-align:center}
  .apps{display:flex}
  .tray{display:flex;justify-content:flex-end;align-items:center;padding:0 30px 3px 0;color:#1a1a1a;font-size:18px;line-height:24px}
  .tray button{flex:none}.lang{text-align:center;margin:0 27px 0 26px}.icons{display:flex;gap:12px}
  .clock{text-align:right;margin:0 10px 0 25px}.up{margin-right:24px}`, () => `
  <button class="weather" aria-label="Widgets"><ui-icon name="weather"></ui-icon><span class="count">8</span></button>
  <div class="apps"><slot></slot></div>
  <div class="tray"><button class="up" aria-label="Hidden icons"><ui-icon name="up"></ui-icon></button><button aria-label="OneDrive"><ui-icon name="cloudoff"></ui-icon></button>
  <button class="lang">ENG<br>IN</button><button class="icons" aria-label="Network, sound and battery"><ui-icon name="wifi"></ui-icon><ui-icon name="speaker"></ui-icon><ui-icon name="battery"></ui-icon></button>
  <button class="clock">21:30<br>05-04-2025</button><button aria-label="Notifications"><ui-icon name="bell"></ui-icon></button></div>`);

define('task-item', `
  :host{display:block;width:66px;height:70px;--icon:36px}
  button{position:relative;display:grid;place-items:center;width:56px;height:56px;margin:6px 5px;border-radius:6px}
  .badge{position:absolute;right:2px;top:3px;width:24px;height:24px;border-radius:50%;color:#fff;font-size:17px;line-height:24px;text-align:center}
  .blue{background:#0078d4}.slate{background:#78909c;font-size:14px;font-weight:600;color:#dfe5e8}.amber{background:#ffc20e}
  .mark{position:absolute;left:50%;bottom:-1px;width:10px;height:5px;margin-left:-5px;border-radius:3px;background:#7d7d7d}
  .current{background:#f1f1f1;box-shadow:0 0 2px rgba(0,0,0,.25)}
  .current .mark{width:24px;margin-left:-12px;background:#0a78d4}`, h => {
  const st = h.getAttribute('state') || '';
  return `<button class="${st}" aria-label="${h.getAttribute('label')}"><ui-icon name="${h.getAttribute('icon')}"></ui-icon>${h.hasAttribute('badge') ? `<span class="badge ${h.getAttribute('tone')}">${h.getAttribute('badge')}</span>` : ''}${st ? '<i class="mark"></i>' : ''}</button>`;
});
</script>
</body>
</html>
